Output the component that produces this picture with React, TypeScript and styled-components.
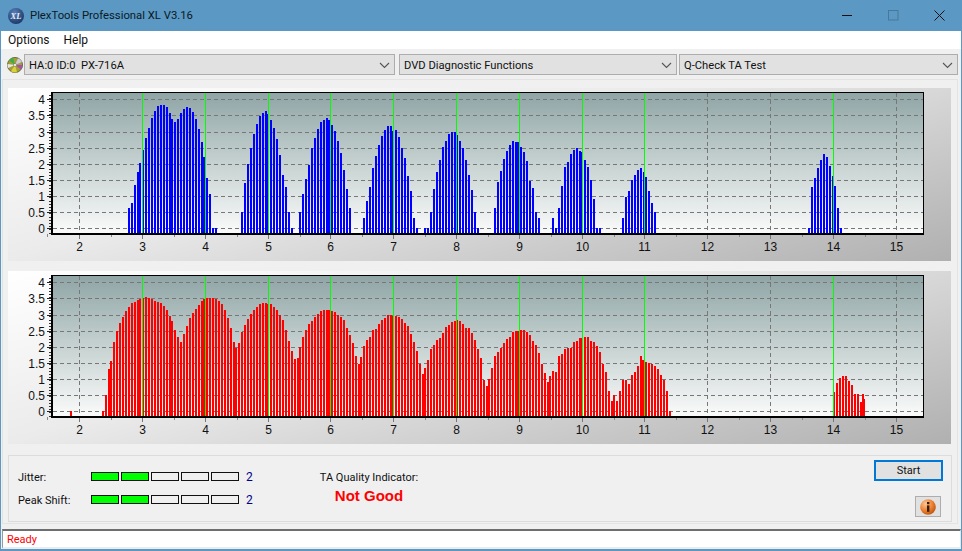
import React from "react";
import styled, { createGlobalStyle } from "styled-components";

const GlobalStyle = createGlobalStyle`
  html, body { margin: 0; padding: 0; background: #5b98c3; }
  * { box-sizing: border-box; }
`;

type Pt = [number, number];
type Bar = { x: number; top: number };

const conv = (ox: number, oy: number, pts: Pt[]): Bar[] =>
  pts.map(([zx, zy]) => ({ x: Math.round(ox + zx / 3), top: Math.round(oy + zy / 3) }));

const blueBars: Bar[] = [
  ...conv(120, 95, [[24,339],[33,323],[42,270],[51,231],[57,204],[66,165],[75,129],[84,99],[93,69],[102,48],[111,33],[120,30],[129,30],[138,36],[147,54],[153,72],[162,81],[171,72],[180,54],[189,42],[198,36],[207,39],[216,51],[225,72],[234,102],[243,141],[249,186],[258,249],[267,297],[276,399],[285,399]]),
  ...conv(235, 93, [[18,357],[27,270],[36,213],[45,165],[54,123],[63,93],[72,69],[81,60],[90,54],[96,63],[105,81],[114,105],[123,138],[132,186],[141,246],[150,282],[159,357],[168,405],
    [192,357],[201,303],[210,258],[219,216],[228,165],[237,135],[246,108],[255,87],[264,81],[273,75],[279,81],[288,96],[297,114],[306,144],[315,180],[324,231],[333,288],[342,345],
    [384,375],[393,324],[402,282],[411,225],[420,189],[429,156],[438,129],[447,111],[456,99],[465,99],[471,114],[480,111],[489,132],[498,165],[507,195],[516,249],[525,294],[534,375],[543,405],
    [567,405],[576,405],[585,357],[594,288],[603,237],[612,201],[621,162],[630,144],[639,123],[648,117],[657,117],[663,126],[672,144],[681,165],[690,201],[699,246],[708,291],[717,357],[726,405],
    [777,345],[786,267],[795,234],[804,198],[813,174],[822,156],[831,144],[840,147],[846,147],[855,162],[864,177],[873,204],[882,264],[891,285]]),
  ...conv(530, 93, [[15,357],[24,375],
    [66,375],[75,405],[84,345],[93,279],[102,222],[111,207],[120,183],[129,171],[138,165],[147,174],[153,177],[162,201],[171,222],[180,261],[189,318],[198,405],[207,405],
    [276,375],[285,312],[294,294],[303,261],[312,246],[321,231],[330,225],[339,237],[345,252],[354,294],[363,330],[372,357],
    [834,405],[843,282],[852,255],[861,225],[870,201],[879,183],[888,192],[897,219],[906,249],[912,279],[921,345],[930,405]]),
];

const redBars: Bar[] = [
  ...conv(40, 270, [[90,423],[186,423],[195,375],[204,297],[210,273],[219,216],[228,183],[237,159],[246,141],[255,123],[264,111],[273,99],[282,96],[291,90],[297,87],[306,84],[315,81],[324,84],[333,87],[342,93],[351,96],[360,99],[369,108],[378,120],[387,138],[393,153],[402,180],[411,201],[420,216],[429,192],[438,168],[447,144],[456,129],[465,117],[474,105],[483,93],[489,87],[498,84],[507,84],[516,84],[525,87],[534,93],[543,102],[552,120],[561,144],[570,174],[579,216],[585,234],[594,219],[603,186],[612,165],[621,147],[630,132],[639,120],[648,111],[657,102],[666,99],[675,99],[681,102]]),
  ...conv(270, 290, [[0,42],[9,51],[18,60],[27,75],[36,90],[45,120],[54,153],[63,183],[72,207],[81,204],[87,171],[96,141],[105,120],[114,102],[123,93],[132,81],[141,72],[150,63],[159,60],[168,60],[174,60],[183,63],[192,66],[201,75],[210,81],[219,90],[228,114],[237,135],[246,159],[255,198],[264,222],[270,201],[279,168],[288,150],[297,141],[306,120],[315,117],[324,102],[333,90],[342,84],[351,75],[360,75],[366,78],[375,78],[384,81],[393,87],[402,99],[411,108],[420,132],[429,156],[438,183],[447,222],[456,252],[462,234],[471,210],[480,177],[489,165],[498,150],[507,144],[516,129],[525,111],[534,105],[543,96],[552,93],[558,90],[567,93],[576,102],[585,114],[594,114],[603,129],[612,150],[621,177],[630,204],[639,270],[648,288],[654,267],[663,234],[672,198],[681,186],[690,174],[699,159],[708,147],[717,141],[726,126],[735,123],[741,123],[750,120],[759,120],[768,126],[777,135],[786,153],[795,165],[804,189],[813,222],[822,249],[831,276],[837,258],[846,243],[855,246],[864,198],[873,192],[882,177],[891,174]]),
  ...conv(560, 330, [[30,54],[39,36],[48,33],[57,24],[63,24],[72,21],[81,21],[90,33],[99,36],[108,48],[117,66],[126,102],[135,126],[144,183],[153,213],[159,195],[168,213],[177,183],[186,150],[195,150],[204,162],[213,135],[222,126],[231,108],[240,78],[246,90],[255,96],[264,99],[273,102],[282,108],[291,117],[300,135],[309,150],[318,183],[327,243]]),
  { x: 833, top: 392 }, { x: 836, top: 383 }, { x: 839, top: 378 }, { x: 842, top: 376 }, { x: 845, top: 376 },
  { x: 848, top: 381 }, { x: 851, top: 385 }, { x: 854, top: 394 }, { x: 857, top: 394 }, { x: 860, top: 402 }, { x: 862, top: 394 }, { x: 863, top: 399 },
];

const Window = styled.div`
  width: 962px;
  height: 551px;
  display: flex;
  flex-direction: column;
  background: #f0f0f0;
  border: solid #5b98c3;
  border-width: 0 1px 2px 1px;
  font-family: Roboto, "Liberation Sans", Arial, sans-serif;
  font-size: 11px;
  color: #111;
  overflow: hidden;
`;

const TitleBar = styled.header`
  height: 31px;
  flex: none;
  margin: 0 -1px;
  display: flex;
  align-items: center;
  background: #5b98c3;
  padding-left: 8px;
`;

const TitleText = styled.span`
  margin-left: 6px;
  font-size: 11.3px;
  color: #0a1a26;
  flex: 1;
`;

const WinButton = styled.span`
  width: 46px;
  height: 31px;
  display: flex;
  align-items: center;
  justify-content: center;
`;

const MenuBar = styled.nav`
  height: 18px;
  flex: none;
  background: #fff;
  display: flex;
  align-items: center;
  gap: 14px;
  padding-left: 7px;
  font-size: 12px;
`;

const MenuItem = styled.span`
  line-height: 18px;
`;

const Toolbar = styled.div`
  height: 30px;
  flex: none;
  display: flex;
  align-items: flex-start;
  padding: 5px 0 0 6px;
`;

const DiscSlot = styled.span`
  width: 17px;
  height: 21px;
  display: flex;
  align-items: center;
`;

const SelectBox = styled.div<{ $width: number; $gap: number }>`
  width: ${(p) => p.$width}px;
  margin-right: ${(p) => p.$gap}px;
  height: 21px;
  background: #e1e1e1;
  border: 1px solid #adadad;
  display: flex;
  align-items: center;
  justify-content: space-between;
  padding: 2px 4px 0 4px;
  white-space: pre;
  font-size: 11.2px;
`;

const Content = styled.main`
  height: 445px;
  flex: none;
  margin-left: 1px;
  margin-right: 3px;
  border: 1px solid #e3e3e3;
  padding: 8px 5px 0;
  display: flex;
  flex-direction: column;
`;

const ChartPanel = styled.section<{ $gap: number }>`
  width: 943px;
  height: 173px;
  flex: none;
  margin-bottom: ${(p) => p.$gap}px;
  background: linear-gradient(165deg, #ffffff 0%, #ebebeb 40%, #c8c8c8 75%, #b0b0b0 100%);
`;

const ChartSvg = styled.svg`
  display: block;
  width: 943px;
  height: 173px;
`;

const AxisLabel = styled.text`
  font-family: "Liberation Sans", Arial, sans-serif;
  font-size: 12px;
  fill: #111;
`;

const ResultGroup = styled.section`
  width: 944px;
  height: 67px;
  flex: none;
  border: 1px solid #dcdcdc;
  position: relative;
  display: flex;
  padding: 12px 0 0 9px;
`;

const MeterColumn = styled.div`
  width: 303px;
  flex: none;
  display: flex;
  flex-direction: column;
  gap: 6px;
`;

const MeterRow = styled.div`
  display: flex;
  align-items: center;
  height: 17px;
`;

const MeterLabel = styled.span`
  width: 73px;
  flex: none;
  padding-top: 2px;
`;

const Segments = styled.div`
  display: flex;
  gap: 2px;
`;

const Segment = styled.span<{ $on: boolean }>`
  width: 28px;
  height: 9px;
  border: 1px solid #111;
  background: ${(p) => (p.$on ? "#00ff00" : "#f0f0f0")};
`;

const MeterValue = styled.span`
  margin-left: 7px;
  font-size: 12px;
  color: #00008b;
`;

const QualityColumn = styled.div`
  width: 96px;
  flex: none;
  display: flex;
  flex-direction: column;
  align-items: center;
  white-space: nowrap;
`;

const QualityTitle = styled.span`
  padding-top: 1px;
  line-height: 17px;
`;

const QualityValue = styled.span`
  margin-top: 1px;
  font-family: "Liberation Sans", Arial, sans-serif;
  font-weight: 700;
  font-size: 15px;
  line-height: 17px;
  color: #ff0000;
`;

const ActionColumn = styled.div`
  position: absolute;
  right: 8px;
  top: 4px;
  display: flex;
  flex-direction: column;
  align-items: flex-end;
  gap: 15px;
`;

const StartButton = styled.button`
  width: 69px;
  height: 21px;
  padding: 0;
  background: #e1e1e1;
  border: 2px solid #0078d7;
  font: inherit;
  color: #111;
`;

const InfoButton = styled.button`
  width: 26px;
  height: 21px;
  margin-right: 2px;
  padding: 0;
  background: #e1e1e1;
  border: 1px solid #adadad;
  display: flex;
  align-items: center;
  justify-content: center;
`;

const StatusBar = styled.footer`
  height: 20px;
  flex: none;
  margin: 5px 0 0 1px;
  background: #fff;
  border-top: 2px solid #6e6e6e;
  border-left: 1px solid #9a9a9a;
  border-right: 1px solid #e8e8e8;
  border-bottom: 2px solid #ececec;
  color: #ff0000;
  line-height: 18px;
  padding-left: 4px;
`;

const xPos: Record<number, number> = {
  2: 79, 3: 142, 4: 205, 5: 268, 6: 330, 7: 393, 8: 456, 9: 519, 10: 582, 11: 644, 12: 707, 13: 770, 14: 833, 15: 896,
};
const xUnits = [2, 3, 4, 5, 6, 7, 8, 9, 10, 11, 12, 13, 14, 15];
const greenUnits = [3, 4, 5, 6, 7, 8, 9, 10, 11, 14];
const yLabels = ["4", "3.5", "3", "2.5", "2", "1.5", "1", "0.5", "0"];
const xOf = (u: number) => xPos[u];

function Chart({ originY, color, bars, gradId }: { originY: number; color: string; bars: Bar[]; gradId: string }) {
  const top = originY + 5;
  const bottom = originY + 146;
  const minorY: number[] = [];
  for (let y = top + 2; y < bottom; y += 3.2) minorY.push(Math.round(y));
  return (
    <ChartSvg viewBox={`8 ${originY} 943 173`} shapeRendering="crispEdges">
      <defs>
        <linearGradient id={gradId} x1="0" y1="0" x2="0" y2="1">
          <stop offset="0" stopColor="#90a5a6" />
          <stop offset="0.5" stopColor="#c6d2d1" />
          <stop offset="1" stopColor="#fbfbfb" />
        </linearGradient>
      </defs>
      <rect x={52} y={top} width={871} height={bottom - top} fill={`url(#${gradId})`} />
      {yLabels.map((l, i) => {
        const y = Math.round(originY + 11.3 + i * 16.12);
        return (
          <g key={l}>
            <line x1={53} x2={923} y1={y + 0.5} y2={y + 0.5} stroke="#777" strokeDasharray="4 3" />
            <line x1={47} x2={51} y1={y + 0.5} y2={y + 0.5} stroke="#222" />
            <AxisLabel x={45} y={y + 4.5} textAnchor="end">{l}</AxisLabel>
          </g>
        );
      })}
      {minorY.map((y) => (
        <line key={y} x1={49} x2={51} y1={y + 0.5} y2={y + 0.5} stroke="#333" />
      ))}
      {xUnits.map((u) => (
        <g key={u}>
          <line x1={xOf(u) + 0.5} x2={xOf(u) + 0.5} y1={top} y2={bottom} stroke="#777" strokeDasharray="4 3" />
          <line x1={xOf(u) + 0.5} x2={xOf(u) + 0.5} y1={bottom} y2={bottom + 5} stroke="#777" />
          {u < 15 && <line x1={xOf(u) + 32} x2={xOf(u) + 32} y1={bottom} y2={bottom + 3} stroke="#888" />}
          <AxisLabel x={xOf(u) + 0.5} y={originY + 163} textAnchor="middle">{u}</AxisLabel>
        </g>
      ))}
      <line x1={xOf(2) - 32} x2={xOf(2) - 32} y1={bottom} y2={bottom + 3} stroke="#888" />
      {bars.map((b, i) => (
        <rect key={i} x={b.x} y={b.top} width={2} height={bottom - b.top} fill={color} />
      ))}
      {greenUnits.map((u) => (
        <line key={u} x1={xOf(u) + 0.5} x2={xOf(u) + 0.5} y1={top} y2={bottom} stroke="#00ff00" />
      ))}
      <rect x={51} y={bottom - 1} width={873} height={2} fill="#000" />
      <rect x={51} y={top - 1} width={873} height={1} fill="#000" />
      <rect x={51} y={top - 1} width={2} height={bottom - top + 2} fill="#000" />
      <rect x={923} y={top - 1} width={1} height={bottom - top + 2} fill="#000" />
    </ChartSvg>
  );
}

const Chevron = () => (
  <svg width="11" height="7" viewBox="0 0 11 7">
    <path d="M1 1l4.5 4.5L10 1" fill="none" stroke="#555" strokeWidth="1.1" />
  </svg>
);

const XlLogo = () => (
  <svg width="16" height="16" viewBox="0 0 16 16">
    <defs>
      <radialGradient id="xlg" cx="0.4" cy="0.3" r="0.8">
        <stop offset="0" stopColor="#5a7fb8" />
        <stop offset="1" stopColor="#14305f" />
      </radialGradient>
    </defs>
    <circle cx="8" cy="8" r="8" fill="url(#xlg)" />
    <text x="8" y="11" textAnchor="middle" fontFamily="Liberation Serif, serif" fontStyle="italic" fontWeight="700" fontSize="8.5" fill="#e8eef6">XL</text>
  </svg>
);

const Disc = () => (
  <svg width="16" height="16" viewBox="0 0 16 16">
    <circle cx="8" cy="8" r="7.6" fill="#a3a033" stroke="#55553a" strokeWidth="0.8" />
    <path d="M8 8L2 3.5A7.5 7.5 0 0 1 6 .8z" fill="#3fae49" />
    <path d="M8 8L15 5A7.5 7.5 0 0 0 11 1.2z" fill="#cfc9dc" />
    <path d="M8 8L14 12.5A7.5 7.5 0 0 0 15.5 8z" fill="#a84fa8" />
    <path d="M8 8L4 14.2A7.5 7.5 0 0 0 10 15.3z" fill="#d9d23a" />
    <path d="M8 8L1 11A7.5 7.5 0 0 1 .5 7z" fill="#e8e8e8" />
    <circle cx="8" cy="8" r="1.6" fill="#eee" stroke="#666" strokeWidth="0.5" />
  </svg>
);

const InfoIcon = () => (
  <svg width="16" height="16" viewBox="0 0 16 16">
    <defs>
      <radialGradient id="infog" cx="0.35" cy="0.3" r="0.8">
        <stop offset="0" stopColor="#fbc99a" />
        <stop offset="0.55" stopColor="#ee7f2d" />
        <stop offset="1" stopColor="#b04f10" />
      </radialGradient>
    </defs>
    <circle cx="8" cy="8" r="7.8" fill="url(#infog)" />
    <rect x="7" y="3" width="2.4" height="2.2" fill="#3a1c08" />
    <rect x="7" y="6.4" width="2.4" height="6.4" fill="#3a1c08" />
  </svg>
);

function Meter({ label, level }: { label: string; level: number }) {
  return (
    <MeterRow>
      <MeterLabel>{label}</MeterLabel>
      <Segments>
        {[0, 1, 2, 3, 4].map((i) => (
          <Segment key={i} $on={i < level} />
        ))}
      </Segments>
      <MeterValue>{level}</MeterValue>
    </MeterRow>
  );
}

export default function App() {
  return (
    <>
      <GlobalStyle />
      <Window>
        <TitleBar>
          <XlLogo />
          <TitleText>PlexTools Professional XL V3.16</TitleText>
          <WinButton>
            <svg width="11" height="11" viewBox="0 0 11 11"><path d="M0 5.5h10" stroke="#111" strokeWidth="1" /></svg>
          </WinButton>
          <WinButton>
            <svg width="11" height="11" viewBox="0 0 11 11"><rect x="0.5" y="0.5" width="9.5" height="9.5" fill="none" stroke="#47789c" /></svg>
          </WinButton>
          <WinButton>
            <svg width="11" height="11" viewBox="0 0 11 11"><path d="M.5.5l10 10M10.5.5l-10 10" stroke="#111" strokeWidth="1" /></svg>
          </WinButton>
        </TitleBar>
        <MenuBar>
          <MenuItem>Options</MenuItem>
          <MenuItem>Help</MenuItem>
        </MenuBar>
        <Toolbar>
          <DiscSlot><Disc /></DiscSlot>
          <SelectBox $width={371} $gap={4}>HA:0 ID:0  PX-716A<Chevron /></SelectBox>
          <SelectBox $width={278} $gap={2}>DVD Diagnostic Functions<Chevron /></SelectBox>
          <SelectBox $width={279} $gap={0}>Q-Check TA Test<Chevron /></SelectBox>
        </Toolbar>
        <Content>
          <ChartPanel $gap={10}>
            <Chart originY={88} color="#0000ff" bars={blueBars} gradId="g1" />
          </ChartPanel>
          <ChartPanel $gap={11}>
            <Chart originY={271} color="#ff0000" bars={redBars} gradId="g2" />
          </ChartPanel>
          <ResultGroup>
            <MeterColumn>
              <Meter label="Jitter:" level={2} />
              <Meter label="Peak Shift:" level={2} />
            </MeterColumn>
            <QualityColumn>
              <QualityTitle>TA Quality Indicator:</QualityTitle>
              <QualityValue>Not Good</QualityValue>
            </QualityColumn>
            <ActionColumn>
              <StartButton>Start</StartButton>
              <InfoButton><InfoIcon /></InfoButton>
            </ActionColumn>
          </ResultGroup>
        </Content>
        <StatusBar>Ready</StatusBar>
      </Window>
    </>
  );
}
